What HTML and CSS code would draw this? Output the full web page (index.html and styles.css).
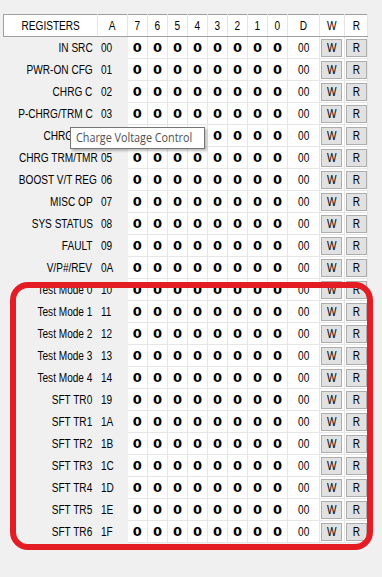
FILE: index.html
```html
<!DOCTYPE html>
<html lang="en">
<head>
    <meta charset="UTF-8">
    <meta name="viewport" content="width=device-width, initial-scale=1.0">
    <title>Registers</title>
    <link rel="stylesheet" href="styles.css">
</head>
<body>

    <div class="panel">
        <table class="regs">
            <colgroup>
                <col class="c-name"><col class="c-addr">
                <col class="c-bit"><col class="c-bit"><col class="c-bit"><col class="c-bit">
                <col class="c-bit"><col class="c-bit"><col class="c-bit"><col class="c-bit">
                <col class="c-dec"><col class="c-w"><col class="c-r">
            </colgroup>
            <thead>
                <tr>
                    <th><span class="t">REGISTERS</span></th><th><span class="t">A</span></th>
                    <th><span class="t">7</span></th><th><span class="t">6</span></th>
                    <th><span class="t">5</span></th><th><span class="t">4</span></th>
                    <th><span class="t">3</span></th><th><span class="t">2</span></th>
                    <th><span class="t">1</span></th><th><span class="t">0</span></th>
                    <th><span class="t">D</span></th><th><span class="t">W</span></th><th><span class="t">R</span></th>
                </tr>
            </thead>
            <tbody id="rows"></tbody>
        </table>

        <!-- highlight around the test / trim registers -->
        <div class="highlight"></div>

        <div class="tooltip"><span class="tip-text">Charge Voltage Control</span></div>
    </div>

    <script>
        // Register list: label and address
        const regs = [
            ['IN SRC', '00'], ['PWR-ON CFG', '01'], ['CHRG C', '02'], ['P-CHRG/TRM C', '03'],
            ['CHRG V C', '04'], ['CHRG TRM/TMR', '05'], ['BOOST V/T REG', '06'], ['MISC OP', '07'],
            ['SYS STATUS', '08'], ['FAULT', '09'], ['V/P#/REV', '0A'],
            ['Test Mode 0', '10'], ['Test Mode 1', '11'], ['Test Mode 2', '12'], ['Test Mode 3', '13'],
            ['Test Mode 4', '14'], ['SFT TR0', '19'], ['SFT TR1', '1A'], ['SFT TR2', '1B'],
            ['SFT TR3', '1C'], ['SFT TR4', '1D'], ['SFT TR5', '1E'], ['SFT TR6', '1F']
        ];

        const body = document.getElementById('rows');
        regs.forEach(([name, addr]) => {
            let html = '<td class="name"><span class="t">' + name + '</span></td>';
            html += '<td class="addr"><span class="t">' + addr + '</span></td>';
            for (let i = 0; i < 8; i++) html += '<td class="bit">0</td>';
            html += '<td class="dec"><span class="t">00</span></td>';
            html += '<td class="act"><button class="btn"><span class="t">W</span></button></td>';
            html += '<td class="act"><button class="btn"><span class="t">R</span></button></td>';
            const tr = document.createElement('tr');
            tr.innerHTML = html;
            body.appendChild(tr);
        });
    </script>

</body>
</html>
```

FILE: styles.css
```css
body {
    margin: 0;
    padding: 0;
    background: #f0f0f0;
    font-family: "Liberation Sans", Arial, sans-serif;
    font-size: 12px;
    color: #000;
}

.panel {
    position: relative;
    width: 382px;
    height: 577px;
    padding: 14px 0 0 3px;
    box-sizing: border-box;
}

/* the UI font is narrower than Arial */
.t {
    display: inline-block;
    transform: scaleX(0.84);
}

.regs {
    width: 364px;
    table-layout: fixed;
    border-collapse: collapse;
}

.c-name { width: 94px; }
.c-addr { width: 30px; }
.c-bit  { width: 20px; }
.c-dec  { width: 32px; }
.c-w    { width: 25px; }
.c-r    { width: 23px; }

.regs th {
    height: 21px;
    padding: 0;
    background: #fff;
    font-weight: normal;
    text-align: center;
    border-top: 1px solid #a0a0a0;
    border-bottom: 1px solid #a0a0a0;
    border-right: 1px solid #e5e5e5;
}

.regs th:first-child {
    border-left: 1px solid #a0a0a0;
}

.regs td {
    height: 21px;
    padding: 0;
    white-space: nowrap;
    overflow: hidden;
}

.regs td.name {
    text-align: right;
    padding-right: 5px;
    background: #f0f0f0;
}

.regs td.name .t {
    transform-origin: right center;
}

.regs td.addr {
    text-align: left;
    padding-left: 3px;
    background: #f0f0f0;
}

.regs td.addr .t {
    transform-origin: left center;
}

.regs td.bit,
.regs td.dec,
.regs td.act {
    background: #fff;
    border-right: 1px solid #e6e6e6;
    border-bottom: 1px solid #e6e6e6;
    text-align: center;
}

.regs td.bit {
    font-family: "DejaVu Sans", sans-serif;
    font-weight: bold;
    font-size: 13px;
}

.regs td.act {
    vertical-align: bottom;
}

.btn {
    display: block;
    width: 21px;
    height: 18px;
    margin: 0 0 1px 1px;
    padding: 0;
    background: #e1e1e1;
    border: 1px solid #adadad;
    border-radius: 0;
    font-family: "Liberation Sans", Arial, sans-serif;
    font-size: 12px;
    color: #000;
    line-height: 16px;
}

.highlight {
    position: absolute;
    left: 10px;
    top: 282px;
    width: 363px;
    height: 268px;
    box-sizing: border-box;
    border: 6px solid #e41c24;
    border-radius: 18px;
}

.tooltip {
    position: absolute;
    left: 70px;
    top: 127px;
    width: 135px;
    height: 22px;
    box-sizing: border-box;
    padding: 0 0 0 5px;
    background: #fff;
    border: 1px solid #767676;
    box-shadow: 2px 2px 2px rgba(0, 0, 0, 0.25);
    font-family: "Open Sans", "Noto Sans", sans-serif;
    font-size: 12px;
    line-height: 19px;
    color: #4f4f4f;
    white-space: nowrap;
}

.tip-text {
    display: inline-block;
    transform: scaleX(0.9);
    transform-origin: left center;
}
```
